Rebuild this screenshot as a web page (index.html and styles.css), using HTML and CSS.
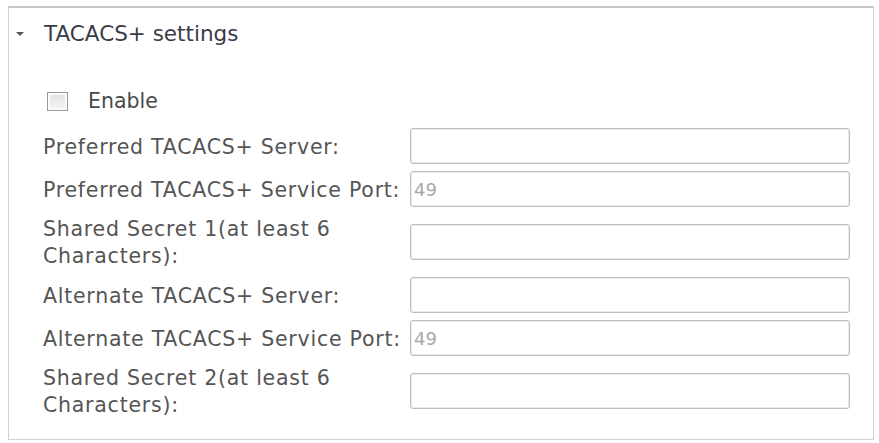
FILE: index.html
```html
<!DOCTYPE html>
<html lang="en">
<head>
    <meta charset="UTF-8">
    <meta name="viewport" content="width=device-width, initial-scale=1.0">
    <title>TACACS+ settings</title>
    <link rel="stylesheet" href="styles.css">
</head>
<body>

    <div class="painel">
        <!-- Cabecalho -->
        <div class="cabecalho">
            <span class="seta"></span>
            <span class="titulo">TACACS+ settings</span>
        </div>

        <label class="habilitar">
            <input type="checkbox" class="caixa">
            <span>Enable</span>
        </label>

        <!-- Campos -->
        <form class="campos">
            <label class="rotulo" for="srv1">Preferred TACACS+ Server:</label>
            <input type="text" id="srv1" class="campo">

            <label class="rotulo" for="porta1">Preferred TACACS+ Service Port:</label>
            <input type="text" id="porta1" class="campo" value="49">

            <label class="rotulo" for="seg1">Shared Secret 1(at least 6<br>Characters):</label>
            <input type="password" id="seg1" class="campo">

            <label class="rotulo" for="srv2">Alternate TACACS+ Server:</label>
            <input type="text" id="srv2" class="campo">

            <label class="rotulo" for="porta2">Alternate TACACS+ Service Port:</label>
            <input type="text" id="porta2" class="campo" value="49">

            <label class="rotulo" for="seg2">Shared Secret 2(at least 6<br>Characters):</label>
            <input type="password" id="seg2" class="campo">
        </form>
    </div>

</body>
</html>
```

FILE: styles.css
```css
* { margin: 0; padding: 0; box-sizing: border-box; font-family: "DejaVu Sans", Verdana, sans-serif; }
body { background: #fff; }
.painel { margin: 6px 0 0 8px; width: 866px; height: 434px; border: 1px solid #d2d2d2; border-top: 2px solid #c6c6c6; background: #fff; }
.cabecalho { display: flex; align-items: center; padding: 12px 0 0 7px; height: 39px; }
.seta { width: 0; height: 0; border-left: 4px solid transparent; border-right: 4px solid transparent; border-top: 4px solid #555; margin-right: 20px; margin-top: 1px; }
.titulo { font-size: 21.5px; line-height: 27px; color: #3b3b48; }
.habilitar { display: flex; align-items: center; margin: 40px 0 0 38px; height: 27px; font-size: 20.5px; color: #4a4a4a; }
.caixa { appearance: none; width: 21px; height: 19px; border: 1px solid #9a9a9a; background: linear-gradient(#e2e2e2, #f6f6f6); box-shadow: inset 0 0 0 2px #fbfbfb; margin: 2px 20px 0 0; }
.campos { display: grid; grid-template-columns: 367px 440px; row-gap: 7px; align-items: center; margin: 14px 0 0 34px; }
.rotulo { font-size: 20.5px; line-height: 27px; letter-spacing: 0.75px; color: #555; padding-top: 2px; }
.campo { height: 36px; border: 1px solid #bdbdbd; border-radius: 3px; box-shadow: inset 0 0 0 1px #ececec; padding: 0 3px; font-size: 18px; color: #a8a8a8; outline: none; background: #fff; }
```
